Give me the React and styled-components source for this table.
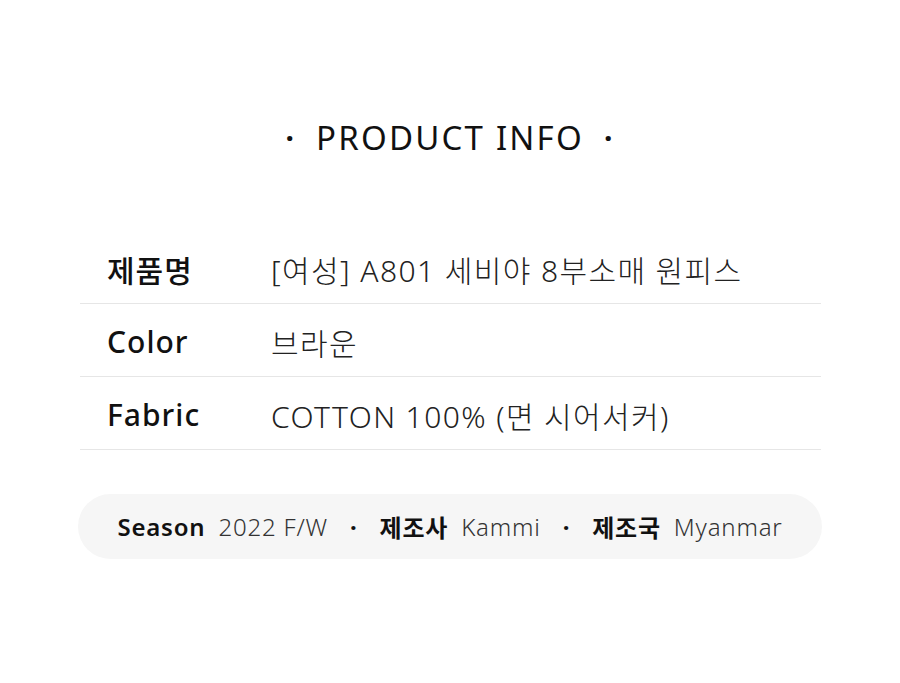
import React from "react";
import styled, { createGlobalStyle } from "styled-components";

const GlobalStyle = createGlobalStyle`
  html, body {
    margin: 0;
    padding: 0;
    background: #ffffff;
  }
  body {
    font-family: "Noto Sans", "Noto Sans CJK KR", sans-serif;
    color: #111;
  }
`;

export default function App() {
  const rows = [
    { label: "제품명", value: "[여성] A801 세비야 8부소매 원피스" },
    { label: "Color", value: "브라운" },
    { label: "Fabric", value: "COTTON 100% (면 시어서커)" },
  ];

  return (
    <>
      <GlobalStyle />
      <Page>
        <Title>
          <Dot>·</Dot>
          PRODUCT INFO
          <Dot>·</Dot>
        </Title>

        <Table>
          {rows.map((row) => (
            <Row key={row.label}>
              <Label>{row.label}</Label>
              <Value>{row.value}</Value>
            </Row>
          ))}
        </Table>

        <Pill>
          <PillKey>Season</PillKey>
          <PillValue>2022 F/W</PillValue>
          <PillDot>·</PillDot>
          <PillKey>제조사</PillKey>
          <PillValue>Kammi</PillValue>
          <PillDot>·</PillDot>
          <PillKey>제조국</PillKey>
          <PillValue>Myanmar</PillValue>
        </Pill>
      </Page>
    </>
  );
}

const Page = styled.div`
  width: 900px;
  height: 683px;
  box-sizing: border-box;
  padding: 112px 78px 0;
  display: flex;
  flex-direction: column;
`;

const Title = styled.h1`
  margin: 0;
  display: flex;
  align-items: center;
  justify-content: center;
  gap: 20px;
  font-size: 33px;
  font-weight: 400;
  letter-spacing: 2.2px;
  line-height: 52px;
  color: #111;
`;

const Dot = styled.span`
  font-weight: 700;
  font-size: 30px;
`;

const Table = styled.div`
  margin: 67px 1px 0 2px;
  display: flex;
  flex-direction: column;
`;

const Row = styled.div`
  display: flex;
  align-items: center;
  box-sizing: border-box;
  height: 73px;
  padding: 3px 0 0 27px;
  border-bottom: 1px solid #e6e6e6;
`;

const Label = styled.div`
  width: 164px;
  font-size: 30px;
  font-weight: 500;
  letter-spacing: 1px;
  color: #111;
`;

const Value = styled.div`
  font-size: 30px;
  font-weight: 300;
  letter-spacing: 1.4px;
  color: #222;
`;

const Pill = styled.div`
  margin-top: 44px;
  height: 65px;
  border-radius: 33px;
  background: #f6f6f6;
  display: flex;
  align-items: center;
  justify-content: center;
  font-size: 24px;
  letter-spacing: 0.8px;
`;

const PillKey = styled.span`
  font-weight: 600;
  color: #111;
  margin-right: 13px;
`;

const PillValue = styled.span`
  font-weight: 300;
  color: #333;
`;

const PillDot = styled.span`
  font-weight: 700;
  margin: 0 22px;
`;
